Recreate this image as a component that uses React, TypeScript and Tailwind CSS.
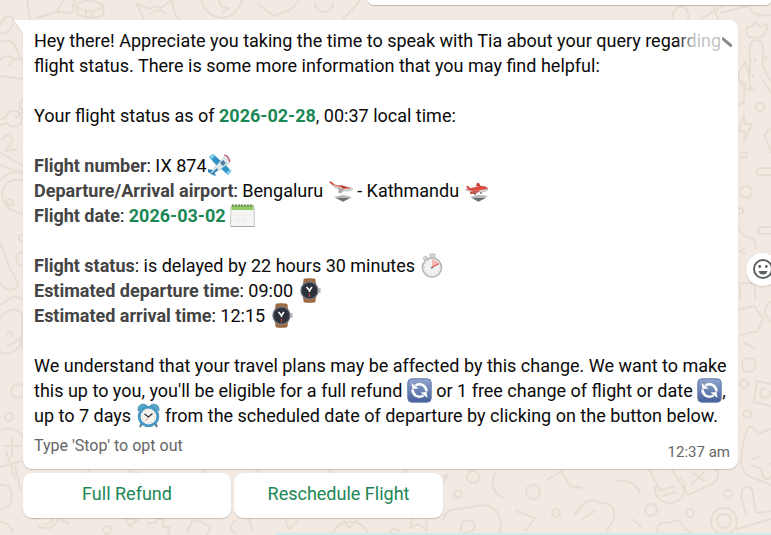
import React from "react";

const EMOJI = "inline-block size-[25px] align-[-6px]";

function Emoji({ label, children }: { label: string; children: React.ReactNode }) {
  return (
    <svg viewBox="0 0 25 25" role="img" aria-label={label} className={EMOJI}>
      {children}
    </svg>
  );
}

function SmallPlane() {
  return (
    <Emoji label="Small airplane">
      <path d="M2 4l4-3 8 7-4 5z" fill="#2f93c8" />
      <path d="M2 4l4-3 2 2-4 4z" fill="#7ccbea" />
      <path d="M12 14l5-4 7 8-3 4z" fill="#2f93c8" />
      <path d="M19 20l4-4 1.500 2-3 4z" fill="#7ccbea" />
      <path d="M1 16l5 1 3 6-3-1-5-3z" fill="#2b86bb" />
      <path d="M3 21l5-7 8-9q4-3 6-1 2 2 0 6L11 18z" fill="#dfeaf0" stroke="#9cafb8" strokeWidth=".5" />
      <path d="M4 21l6-6 1 2-5 4z" fill="#2a7fb3" />
      <path d="M13 10l3-3 3 3-3 3z" fill="#4d7f9d" />
      <path d="M17 2l3 1 1 2 2 4" fill="none" stroke="#c9565b" strokeWidth="1.200" />
    </Emoji>
  );
}

function Departure() {
  return (
    <Emoji label="Airplane departure">
      <path d="M6 19l9-2 9 2-9 5z" fill="#b5b7b7" />
      <path d="M8 20h14l-7 3.500z" fill="#6c7171" />
      <path d="M1 4q2 0 4 2l6 2 8 1q4 0 6 2-3 3-8 2-7-1-11-4z" fill="#d8d4d3" stroke="#a4a2a2" strokeWidth=".4" />
      <path d="M1 4q2-1 3 0l3 3 8 1 8 2q-3 1-7 0L5 7z" fill="#df4a3e" />
      <path d="M10 9l6 3-3 3.500-3-1 1-3z" fill="#a9a9aa" />
      <path d="M12 7l4 1 3 2-4 1z" fill="#b93e36" />
    </Emoji>
  );
}

function Arrival() {
  return (
    <Emoji label="Airplane arriving">
      <path d="M6 19l8-2 10 1-9 6z" fill="#b5b7b7" />
      <path d="M8 20h14l-8 3.500z" fill="#6c7171" />
      <path d="M1 12l6-2 10-2q6 0 7 3-1 3-7 3-9 1-16-2z" fill="#d8d4d3" stroke="#a4a2a2" strokeWidth=".4" />
      <path d="M2 11l6-1 8-2q7 0 8 3l-8 1-8 1z" fill="#df4a3e" />
      <path d="M12 8l1-3 2 0 2 4zM2 8l2 0 3 3-3 0z" fill="#c9423a" />
      <path d="M6 14l8-2 2 1-5 3-5 0z" fill="#c9554d" />
      <path d="M17 14v2m-6-1v2" stroke="#555" strokeWidth="1.200" />
    </Emoji>
  );
}

function Calendar() {
  return (
    <Emoji label="Spiral calendar">
      <path d="M1 3h23l.5 20.5H.5z" fill="#f5f5f4" stroke="#b8bdb6" strokeWidth=".8" />
      <path d="M1.5 2h22v5h-22z" fill="#95cb66" />
      <path d="M3 1v3m3-3v3m3-3v3m3-3v3m3-3v3m3-3v3m3-3v3" stroke="#596a4f" />
      <path d="M2 12h21M2 17h21M8 8v14m7-14v14" stroke="#ebebea" strokeWidth=".7" />
      <path d="M1 23.500h23" stroke="#a8a8a8" />
    </Emoji>
  );
}

function Stopwatch() {
  return (
    <Emoji label="Stopwatch">
      <path d="M10 1h5v5h-5zM3 5l3-2 3 3-3 3z" fill="#d5d8da" stroke="#a3a5a6" strokeWidth=".6" />
      <circle cx="12" cy="14.5" r="9.5" fill="#f1f1f0" stroke="#b3b5b5" strokeWidth="1.6" />
      <path d="M12 14.5V7q5 0 7 4z" fill="#f7b9b6" />
      <path d="M11 15l8-4.500" stroke="#dd4d4a" strokeWidth="1.1" />
      <circle cx="12" cy="14.5" r="7.6" fill="none" stroke="#a5a7a6" strokeDasharray=".6 3.380" />
      <circle cx="12" cy="14.5" r="1" fill="#777" />
    </Emoji>
  );
}

function Watch() {
  return (
    <Emoji label="Watch">
      <path d="M6 1q5-1 11 0l1 7H5zM5 17h13l-1 7q-6 1-11 0z" fill="#a26b3f" stroke="#805434" strokeWidth=".5" />
      <circle cx="11.500" cy="12.500" r="8.600" fill="#2c303b" stroke="#777b83" strokeWidth="1.200" />
      <path d="M20.500 10h2v5h-2z" fill="#b1b3b6" />
      <circle cx="11.500" cy="12.500" r="6.800" fill="none" stroke="#6e727b" strokeDasharray=".6 2.950" />
      <path d="M8.500 9l3 3.500 2.500-3.500M11.500 12.500v1.500" fill="none" stroke="#fff" strokeWidth="1.600" />
      <path d="M11.500 15.500v3.500" stroke="#cc4832" strokeWidth="1.200" />
    </Emoji>
  );
}

function Refresh() {
  return (
    <Emoji label="Counterclockwise arrows">
      <defs>
        <linearGradient id="tile" x1="0" x2="0" y1="0" y2="1">
          <stop stopColor="#91a7cf" />
          <stop offset="1" stopColor="#465f9a" />
        </linearGradient>
      </defs>
      <rect x=".8" y=".8" width="23.4" height="23.4" rx="4" fill="url(#tile)" stroke="#647bad" />
      <path d="M8.500 7.500q4-2.500 8 0 3 2.500 3 6M16.500 17.500q-4 2.500-8 0-3-2.500-3-6" fill="none" stroke="#fff" strokeWidth="2.600" />
      <path d="M4.500 5l1 6 6-.5zM20.500 20l-1-6-6 .5z" fill="#fff" />
    </Emoji>
  );
}

function AlarmClock() {
  return (
    <Emoji label="Alarm clock">
      <path d="M6 20l-2 4M19 20l2 4" stroke="#58798c" strokeWidth="2" />
      <path d="M2 8q-1-6 5-7 3 0 4 2zM23 8q1-6-5-7-3 0-4 2z" fill="#55a7cc" stroke="#397e9f" strokeWidth=".6" />
      <circle cx="12.5" cy="13.500" r="9.300" fill="#f6f5ee" stroke="#4697c2" strokeWidth="2.800" />
      <circle cx="12.5" cy="13.500" r="6.600" fill="none" stroke="#a2a9ab" strokeDasharray=".6 2.850" />
      <path d="M8.500 11l4 3 4-3.500" fill="none" stroke="#333" strokeWidth="1.300" />
      <path d="M12.500 14l-3 4" stroke="#cf645d" strokeWidth=".7" />
    </Emoji>
  );
}

function Doodles() {
  return (
    <svg
      aria-hidden="true"
      className="absolute left-0 top-0 h-[535px] w-[771px]"
      viewBox="0 0 771 535"
      fill="none"
      stroke="#e8ddd2"
      strokeWidth="2"
      strokeLinecap="round"
      strokeLinejoin="round"
    >
      {/* top edge */}
      <path d="M27 0l3 20M36 18l21-6 7-12M57 12l15 1 2-12M76 5q13-9 28 1l-1 9q-13 6-26-1zM77 7q13 8 26 0M86 11v5m6-5v5" />
      <path d="M144 20l-7-16 13 5q5-5 11-1l11-8 3 15 5 5M150 14q8-7 16 0M201 0q4 15 20 18 16-1 21-18M219 1l3 6 7 1-6 4M258 4l16 12 18-7 7-9M315 3a9 9 0 1 0 18 0M343 19l17-18" />
      <path d="M672 18q2-11 10-12 8 4 6 13M701 19l20-12M714 9l4 10M721 13l31-8M750 9q4 8 21 6" />
      {/* left edge */}
      <path d="M0 25q5-11 12-8 5 7-5 15l-7 2M0 42q11-4 15 4 6 11 7 18M0 60q7-8 16 0M9 65q5-9 13-6M0 76l23 3M22 100q-5 5 0 10M0 119l6-2a8 8 0 1 1 1 6l-7 2M16 118l7-6" />
      <path d="M2 139q5-7 10-1 2 4-7 13l12-2M0 152l23 14M0 165l23 9M0 180q9-10 23-8M23 181q-17-5-21 12 0 17 21 21" />
      <circle cx="10" cy="202" r="3" />
      <circle cx="22" cy="238" r="3" />
      <circle cx="23" cy="259" r="7" />
      <path d="M0 242l10 27q7 9 8 18-10 7-18-4M0 305l14-9 9 3M0 318q12-15 22-4v28q-10 16-22 10M7 334q4-5 6 2M8 345q7-1 12-8l2 11" />
      <circle cx="18" cy="391" r="7" />
      <circle cx="9" cy="417" r="4" />
      <path d="M0 430q16-5 23 7M4 446h17M12 439v17M0 467l22-6M6 451l9 27M0 485q12-2 12 13 0 9-12 12M15 466l6 25" />
      {/* right side: carrot, bolt, bars and cactus */}
      <path d="M740 8l5-5M749 37q-7-9 3-11l3-4 5 5 7-3q1 10-7 14zM750 75V45q5-9 12-2 3 7 0 22l9 17M754 90q-18-2-15-18l6-10q5 8 5 28" />
      <path d="M749 49v3m6 7v3m-2 12v3m13-20v3m-18 29l3-2" />
      <path d="M739 81l6 2-1 19-6 3M763 80l8 13M744 115l-6 17 7-1-1 10 8-17h-7zM771 129q-10 5-3 14l3 9" />
      <circle cx="760" cy="107" r="4" />
      <circle cx="744" cy="155" r="3" />
      <circle cx="746" cy="192" r="6" />
      <circle cx="740" cy="211" r="3" />
      <path d="M771 168h-13q-3 4 0 7h13M771 227h-11q-4 3 0 7h11M738 225q3 11 9 12 10 0 9 12M745 249l-6 2 6 3M738 283h17v15M740 284v16" />
      <path d="M738 310l16-4 9 12-5 13-18 4M771 301q-12 10 0 21M744 343l11 5" />
      <circle cx="749" cy="365" r="7" />
      <circle cx="744" cy="384" r="4" />
      <path d="M771 384l-14-3-3 21 17 4M765 388a5 5 0 1 0 5 4M743 443q3-11 5-15 2-4 6 1l6 4 11-4M741 460q1 16 15 19l15 6M753 459l8-3m-8 10l9 3q-1 10 6 10 7-2 3-16M743 443l-2 17" />
      <circle cx="747" cy="414" r="4" />
      {/* lower area */}
      <path d="M650 470l10 21M672 470l16 25 26-12q8-9 1-15M692 472l12 9m0-9l-12 12M655 487a15 15 0 1 0 25-10M661 490l14-4m-13 10l14-4" />
      <circle cx="728" cy="494" r="4" />
      <circle cx="651" cy="510" r="6" />
      <circle cx="690" cy="513" r="4" />
      <circle cx="724" cy="521" r="13" />
      <circle cx="724" cy="521" r="7" />
      <path d="M742 495q-2-7 6-8 6 2 5 9l3 17 15-2M737 529l34-10M741 496l5 19M657 532q1-12 12-9 11-7 15 5l8 5" />
      <circle cx="473" cy="477" r="6" />
      <circle cx="458" cy="494" r="4" />
      <path d="M443 477l5-2-5 8M495 473q-8 16 8 25M443 520q3-12 15-11l27-4q19 4 15 28M461 530q0-13 12-8 6 9-9 11" />
      <circle cx="533" cy="492" r="7" />
      <circle cx="556" cy="513" r="4" />
      <path d="M516 511l19 7-10 13M547 480l14-9 9 15 12 2M575 515q10-20 26-12 16-1 13 16l-7 12M582 519l13-8M618 481q16-2 22 12M632 519l9 7" />
      <path d="M0 522q9-1 13 11M35 520q-2-13 10-15 13 2 13 15-7 13-20 6M39 518a7 7 0 1 1 5 6M61 520l8 3M124 518l14 2-8 6q-3-3-6-8M147 524l9-2 1-4 7 2-2 6 8 2-2 7M187 532l6-12 9 2 8 5-3 8M235 521q-8 6 0 12M249 519l3 11M285 519l4 10 9-8" />
      <circle cx="107" cy="530" r="4" />
      <path d="M333 533q6-13 20-11 12 2 15 12M344 520l5 8 9-8M413 518l-3 10 8-4 9 7-1-13M390 532q4-7 9-1M89 470l-3 4m43-3l12 3m61-4l5 4m51-4l-3 5m75-5l4 5m70-5l8 6" />
    </svg>
  );
}

const Label = ({ children }: { children: React.ReactNode }) => (
  <strong className="font-bold text-[#444]">{children}</strong>
);
const DateText = ({ children }: { children: React.ReactNode }) => (
  <time className="font-bold text-[#1b8755]">{children}</time>
);

export default function App() {
  return (
    <main className="relative flex min-h-screen flex-col overflow-hidden bg-[#f1e9e2] font-['Roboto','Liberation_Sans',sans-serif] text-[18px] leading-[25px] text-[#0a0a0a]">
      <Doodles />
      <div className="relative ml-auto h-[5px] w-[403px] shrink-0 rounded-b-lg bg-white shadow-[0_1px_1px_rgba(0,0,0,0.2)]" />
      <section className="relative mt-[15px] flex items-center gap-2 pl-[23px]">
        <div className="min-w-0 flex-1">
          <article className="relative rounded-[9px] rounded-tl-none bg-white pt-2 pr-2 pb-1 pl-[11px] shadow-[0_1px_1px_rgba(0,0,0,0.18)]">
            <svg aria-hidden="true" viewBox="0 0 10 15" className="absolute -left-[9px] top-0 h-[15px] w-[10px]">
              <path d="M1 0h9v15L1 2Q0 0 1 0" fill="#fff" />
              <path d="M1 2l8 12" stroke="#d4ccc5" strokeWidth=".7" />
            </svg>
            <div className="flex flex-col gap-[25px]">
              <p>
                Hey there! Appreciate you taking the time to speak with Tia about your query regarding flight
                status. There is some more information that you may find helpful:
              </p>
              <p>
                Your flight status as of <DateText>2026-02-28</DateText>, 00:37 local time:
              </p>
              <div>
                <p className="h-[25px]"><Label>Flight number</Label>: IX 874<SmallPlane /></p>
                <p className="h-[25px]"><Label>Departure/Arrival airport</Label>: Bengaluru <Departure /> - Kathmandu <Arrival /></p>
                <p className="h-[25px]"><Label>Flight date</Label>: <DateText>2026-03-02</DateText> <Calendar /></p>
              </div>
              <div>
                <p className="h-[25px]"><Label>Flight status</Label>: is delayed by 22 hours 30 minutes <Stopwatch /></p>
                <p className="h-[25px]"><Label>Estimated departure time</Label>: 09:00 <Watch /></p>
                <p className="h-[25px]"><Label>Estimated arrival time</Label>: 12:15 <Watch /></p>
              </div>
              <p>
                We understand that your travel plans may be affected by this change. We want to make this up to
                you, you'll be eligible for a full refund <Refresh /> or 1 free change of flight or date <Refresh />, up to
                7 days <AlarmClock /> from the scheduled date of departure by clicking on the button below.
              </p>
            </div>
            <footer className="flex items-start justify-between text-[#666]">
              <p className="pt-[5px] text-[16px]">Type 'Stop' to opt out</p>
              <time className="pt-3 text-[15px]">12:37 am</time>
            </footer>
            <button
              type="button"
              aria-label="Message options"
              className="absolute right-0 top-0 flex h-[34px] w-[62px] items-center justify-end rounded-tr-[9px] bg-linear-to-r from-transparent via-white/75 via-30% to-white/75 pt-[10px] pr-[6px]"
            >
              <svg viewBox="0 0 10 10" className="size-[10px]" fill="none" stroke="#8c8c8c" strokeWidth="3">
                <path d="M0 1l10 8.500" />
              </svg>
            </button>
          </article>
          <div className="mt-1 flex gap-[3px] text-[#1b8755]">
            <button type="button" className="h-[45px] w-[208px] rounded-[9px] bg-white pb-1 shadow-[0_1px_1px_rgba(0,0,0,0.18)]">Full Refund</button>
            <button type="button" className="h-[45px] w-[209px] rounded-[9px] bg-white pb-1 shadow-[0_1px_1px_rgba(0,0,0,0.18)]">Reschedule Flight</button>
          </div>
        </div>
        <button
          type="button"
          aria-label="React to message"
          className="-mr-2 flex size-[33px] shrink-0 items-center justify-center rounded-full bg-white shadow-[0_1px_2px_rgba(0,0,0,0.15)]"
        >
          <svg viewBox="0 0 20 20" className="size-5" fill="none" stroke="#5b6062" strokeWidth="2">
            <circle cx="10" cy="10" r="9" />
            <circle cx="6.700" cy="7.500" r="1.400" fill="#5b6062" stroke="none" />
            <circle cx="13.300" cy="7.500" r="1.400" fill="#5b6062" stroke="none" />
            <path d="M5.500 12h9q-1 3.500-4.500 3.500T5.500 12z" fill="#5b6062" stroke="none" />
          </svg>
        </button>
      </section>
      <div className="relative mt-auto ml-[275px] h-[2px] rounded-tl bg-[#cceeea]" />
    </main>
  );
}
